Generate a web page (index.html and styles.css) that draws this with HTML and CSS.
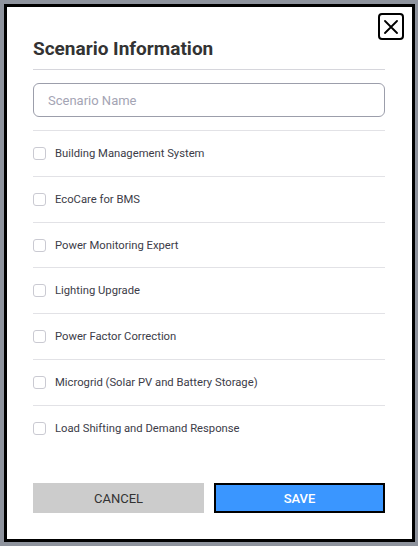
FILE: index.html
```html
<!DOCTYPE html>
<html lang="en">
<head>
<meta charset="utf-8">
<title>Scenario Information</title>
<link rel="stylesheet" href="styles.css">
</head>
<body>
<div class="modal">
  <button class="close" type="button" aria-label="Close">
    <svg width="14" height="14" viewBox="0 0 14 14"><path d="M1 1 L13 13 M13 1 L1 13" stroke="#000" stroke-width="1.8" stroke-linecap="round" fill="none"/></svg>
  </button>
  <h2 class="title">Scenario Information</h2>
  <div class="field">
    <input class="input" type="text" placeholder="Scenario Name">
  </div>
  <ul class="options">
    <li class="option"><span class="box"></span><span class="label">Building Management System</span></li>
    <li class="option"><span class="box"></span><span class="label">EcoCare for BMS</span></li>
    <li class="option"><span class="box"></span><span class="label">Power Monitoring Expert</span></li>
    <li class="option"><span class="box"></span><span class="label">Lighting Upgrade</span></li>
    <li class="option"><span class="box"></span><span class="label">Power Factor Correction</span></li>
    <li class="option"><span class="box"></span><span class="label">Microgrid (Solar PV and Battery Storage)</span></li>
    <li class="option"><span class="box"></span><span class="label">Load Shifting and Demand Response</span></li>
  </ul>
  <div class="actions">
    <button class="btn cancel" type="button">CANCEL</button>
    <button class="btn save" type="button">SAVE</button>
  </div>
</div>
</body>
</html>
```

FILE: styles.css
```css
* { box-sizing: border-box; }
html, body { margin: 0; padding: 0; }
body {
  background: #8e939d;
  font-family: Roboto, "Liberation Sans", Arial, sans-serif;
  width: 418px;
  height: 546px;
  overflow: hidden;
}
.modal {
  position: relative;
  margin: 4px 0 0 4px;
  width: 411px;
  height: 538px;
  background: #fff;
  border: 3px solid #000;
  padding: 30px 27px 26px 26px;
  display: flex;
  flex-direction: column;
}
.close {
  position: absolute;
  top: 6px;
  right: 8px;
  width: 26px;
  height: 27px;
  border: 2px solid #000;
  border-radius: 4px;
  background: #fff;
  padding: 0;
  display: flex;
  align-items: center;
  justify-content: center;
}
.title {
  margin: 0;
  font-size: 19px;
  line-height: 24px;
  font-weight: 700;
  color: #333;
  padding-bottom: 8px;
  border-bottom: 1px solid #d6d6dc;
}
.field {
  padding: 13px 0;
}
.input {
  display: block;
  width: 100%;
  height: 34px;
  border: 1px solid #9c9eab;
  border-radius: 6px;
  padding: 0 14px;
  font-family: inherit;
  font-size: 13px;
  color: #333;
  outline: none;
}
.input::placeholder { color: #a4a4b4; }
.options {
  list-style: none;
  margin: 0;
  padding: 0;
  border-top: 1px solid #e2e2e6;
}
.option {
  height: 45.83px;
  display: flex;
  align-items: center;
  border-bottom: 1px solid #e2e2e6;
}
.option:last-child { border-bottom: none; }
.box {
  width: 13px;
  height: 13px;
  border: 1px solid #cacad2;
  border-radius: 3px;
  margin-right: 9px;
  flex: none;
}
.label {
  font-size: 11.25px;
  color: #3c3c48;
}
.actions {
  margin-top: auto;
  display: flex;
  gap: 10px;
}
.btn {
  flex: none;
  width: 171px;
  height: 30px;
  font-family: inherit;
  font-size: 13px;
  border: none;
  padding: 0;
}
.cancel {
  background: #cccccc;
  color: #333;
}
.save {
  background: #3a96ff;
  color: #fff;
  font-weight: 500;
  border: 2px solid #000;
}
```
